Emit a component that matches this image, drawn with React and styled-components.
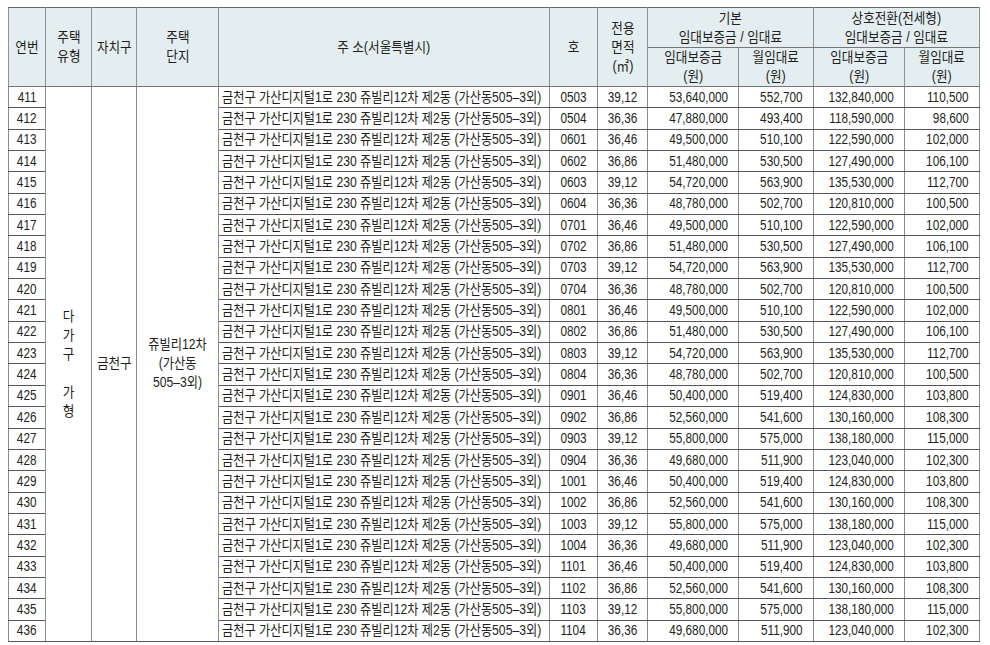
import React from 'react';
import styled, { createGlobalStyle } from 'styled-components';

const FONT = '"Liberation Sans", "Noto Sans CJK KR", sans-serif';
const ADDRESS = '금천구 가산디지털1로 230 쥬빌리12차 제2동 (가산동505–3외)';
const ROW_HEIGHT = 21.35;

const GlobalStyle = createGlobalStyle`
  body {
    margin: 0;
    padding: 7px 0 0 8px;
    background: #fff;
  }
`;

const Table = styled.table`
  border-collapse: collapse;
  table-layout: fixed;
  width: 971px;
  font-family: ${FONT};
  font-size: 14px;
  color: #231f20;
`;

const Th = styled.th`
  background: #e4eef0;
  font-weight: normal;
  text-align: center;
  vertical-align: middle;
  line-height: 19px;
  padding: 0;
  border: 1px solid #8f9293;
  border-top-color: #666;
  border-bottom-color: #777;
  white-space: nowrap;
`;

const HeadRow = styled.tr`
  height: ${p => p.$h}px;
`;

const BodyRow = styled.tr`
  height: ${ROW_HEIGHT}px;
`;

const Td = styled.td`
  padding: ${p => (p.$align === 'right' ? '0 10px 0 0' : p.$align === 'left' ? '0 0 0 3px' : '0')};
  text-align: ${p => p.$align || 'center'};
  vertical-align: middle;
  line-height: 19px;
  border-top: 1px solid #555;
  border-bottom: 1px solid #555;
  border-left: 1px solid #8c8c8c;
  border-right: 1px solid #8c8c8c;
  white-space: nowrap;
  overflow: visible;
`;

const Narrow = styled.span`
  display: inline-block;
  transform: scaleX(${p => p.$scale || 0.84});
  transform-origin: ${p => p.$origin || 'center'} center;
  white-space: nowrap;
`;

const rows = [
  ['411', '0503', '39,12', '53,640,000', '552,700', '132,840,000', '110,500'],
  ['412', '0504', '36,36', '47,880,000', '493,400', '118,590,000', '98,600'],
  ['413', '0601', '36,46', '49,500,000', '510,100', '122,590,000', '102,000'],
  ['414', '0602', '36,86', '51,480,000', '530,500', '127,490,000', '106,100'],
  ['415', '0603', '39,12', '54,720,000', '563,900', '135,530,000', '112,700'],
  ['416', '0604', '36,36', '48,780,000', '502,700', '120,810,000', '100,500'],
  ['417', '0701', '36,46', '49,500,000', '510,100', '122,590,000', '102,000'],
  ['418', '0702', '36,86', '51,480,000', '530,500', '127,490,000', '106,100'],
  ['419', '0703', '39,12', '54,720,000', '563,900', '135,530,000', '112,700'],
  ['420', '0704', '36,36', '48,780,000', '502,700', '120,810,000', '100,500'],
  ['421', '0801', '36,46', '49,500,000', '510,100', '122,590,000', '102,000'],
  ['422', '0802', '36,86', '51,480,000', '530,500', '127,490,000', '106,100'],
  ['423', '0803', '39,12', '54,720,000', '563,900', '135,530,000', '112,700'],
  ['424', '0804', '36,36', '48,780,000', '502,700', '120,810,000', '100,500'],
  ['425', '0901', '36,46', '50,400,000', '519,400', '124,830,000', '103,800'],
  ['426', '0902', '36,86', '52,560,000', '541,600', '130,160,000', '108,300'],
  ['427', '0903', '39,12', '55,800,000', '575,000', '138,180,000', '115,000'],
  ['428', '0904', '36,36', '49,680,000', '511,900', '123,040,000', '102,300'],
  ['429', '1001', '36,46', '50,400,000', '519,400', '124,830,000', '103,800'],
  ['430', '1002', '36,86', '52,560,000', '541,600', '130,160,000', '108,300'],
  ['431', '1003', '39,12', '55,800,000', '575,000', '138,180,000', '115,000'],
  ['432', '1004', '36,36', '49,680,000', '511,900', '123,040,000', '102,300'],
  ['433', '1101', '36,46', '50,400,000', '519,400', '124,830,000', '103,800'],
  ['434', '1102', '36,86', '52,560,000', '541,600', '130,160,000', '108,300'],
  ['435', '1103', '39,12', '55,800,000', '575,000', '138,180,000', '115,000'],
  ['436', '1104', '36,36', '49,680,000', '511,900', '123,040,000', '102,300'],
];

const widths = [37, 46, 45, 82, 331, 48, 50, 91, 75, 91, 75];

// Korean text is condensed a little less than the digits
const HANGUL = 0.9;

const Lines = ({ children, scale = HANGUL }) => (
  <Narrow $scale={scale}>
    {children.map((line, i) => (
      <React.Fragment key={i}>
        {i > 0 && <br />}
        {line}
      </React.Fragment>
    ))}
  </Narrow>
);

const App = () => (
  <>
    <GlobalStyle />
    <Table>
      <colgroup>
        {widths.map((w, i) => <col key={i} style={{ width: w }} />)}
      </colgroup>
      <thead>
        <HeadRow $h={40}>
          <Th rowSpan={2}><Lines>{['연번']}</Lines></Th>
          <Th rowSpan={2}><Lines>{['주택', '유형']}</Lines></Th>
          <Th rowSpan={2}><Lines>{['자치구']}</Lines></Th>
          <Th rowSpan={2}><Lines>{['주택', '단지']}</Lines></Th>
          <Th rowSpan={2}><Lines>{['주 소(서울특별시)']}</Lines></Th>
          <Th rowSpan={2}><Lines>{['호']}</Lines></Th>
          <Th rowSpan={2}><Lines>{['전용', '면적', '(㎡)']}</Lines></Th>
          <Th colSpan={2}><Lines>{['기본', '임대보증금 / 임대료']}</Lines></Th>
          <Th colSpan={2}><Lines>{['상호전환(전세형)', '임대보증금 / 임대료']}</Lines></Th>
        </HeadRow>
        <HeadRow $h={38}>
          <Th><Lines>{['임대보증금', '(원)']}</Lines></Th>
          <Th><Lines>{['월임대료', '(원)']}</Lines></Th>
          <Th><Lines>{['임대보증금', '(원)']}</Lines></Th>
          <Th><Lines>{['월임대료', '(원)']}</Lines></Th>
        </HeadRow>
      </thead>
      <tbody>
        {rows.map(([no, ho, area, dep, rent, dep2, rent2], i) => (
          <BodyRow key={no}>
            <Td><Narrow>{no}</Narrow></Td>
            {i === 0 && (
              <>
                <Td rowSpan={rows.length}>
                  <Lines>{['다', '가', '구', '\u00a0', '가', '형']}</Lines>
                </Td>
                <Td rowSpan={rows.length}><Lines>{['금천구']}</Lines></Td>
                <Td rowSpan={rows.length}>
                  <Lines scale={0.87}>{['쥬빌리12차', '(가산동', '505–3외)']}</Lines>
                </Td>
              </>
            )}
            <Td $align="left"><Narrow $origin="left" $scale={0.87}>{ADDRESS}</Narrow></Td>
            <Td><Narrow>{ho}</Narrow></Td>
            <Td><Narrow>{area}</Narrow></Td>
            <Td $align="right"><Narrow $origin="right">{dep}</Narrow></Td>
            <Td $align="right"><Narrow $origin="right">{rent}</Narrow></Td>
            <Td $align="right"><Narrow $origin="right">{dep2}</Narrow></Td>
            <Td $align="right"><Narrow $origin="right">{rent2}</Narrow></Td>
          </BodyRow>
        ))}
      </tbody>
    </Table>
  </>
);

export default App;
